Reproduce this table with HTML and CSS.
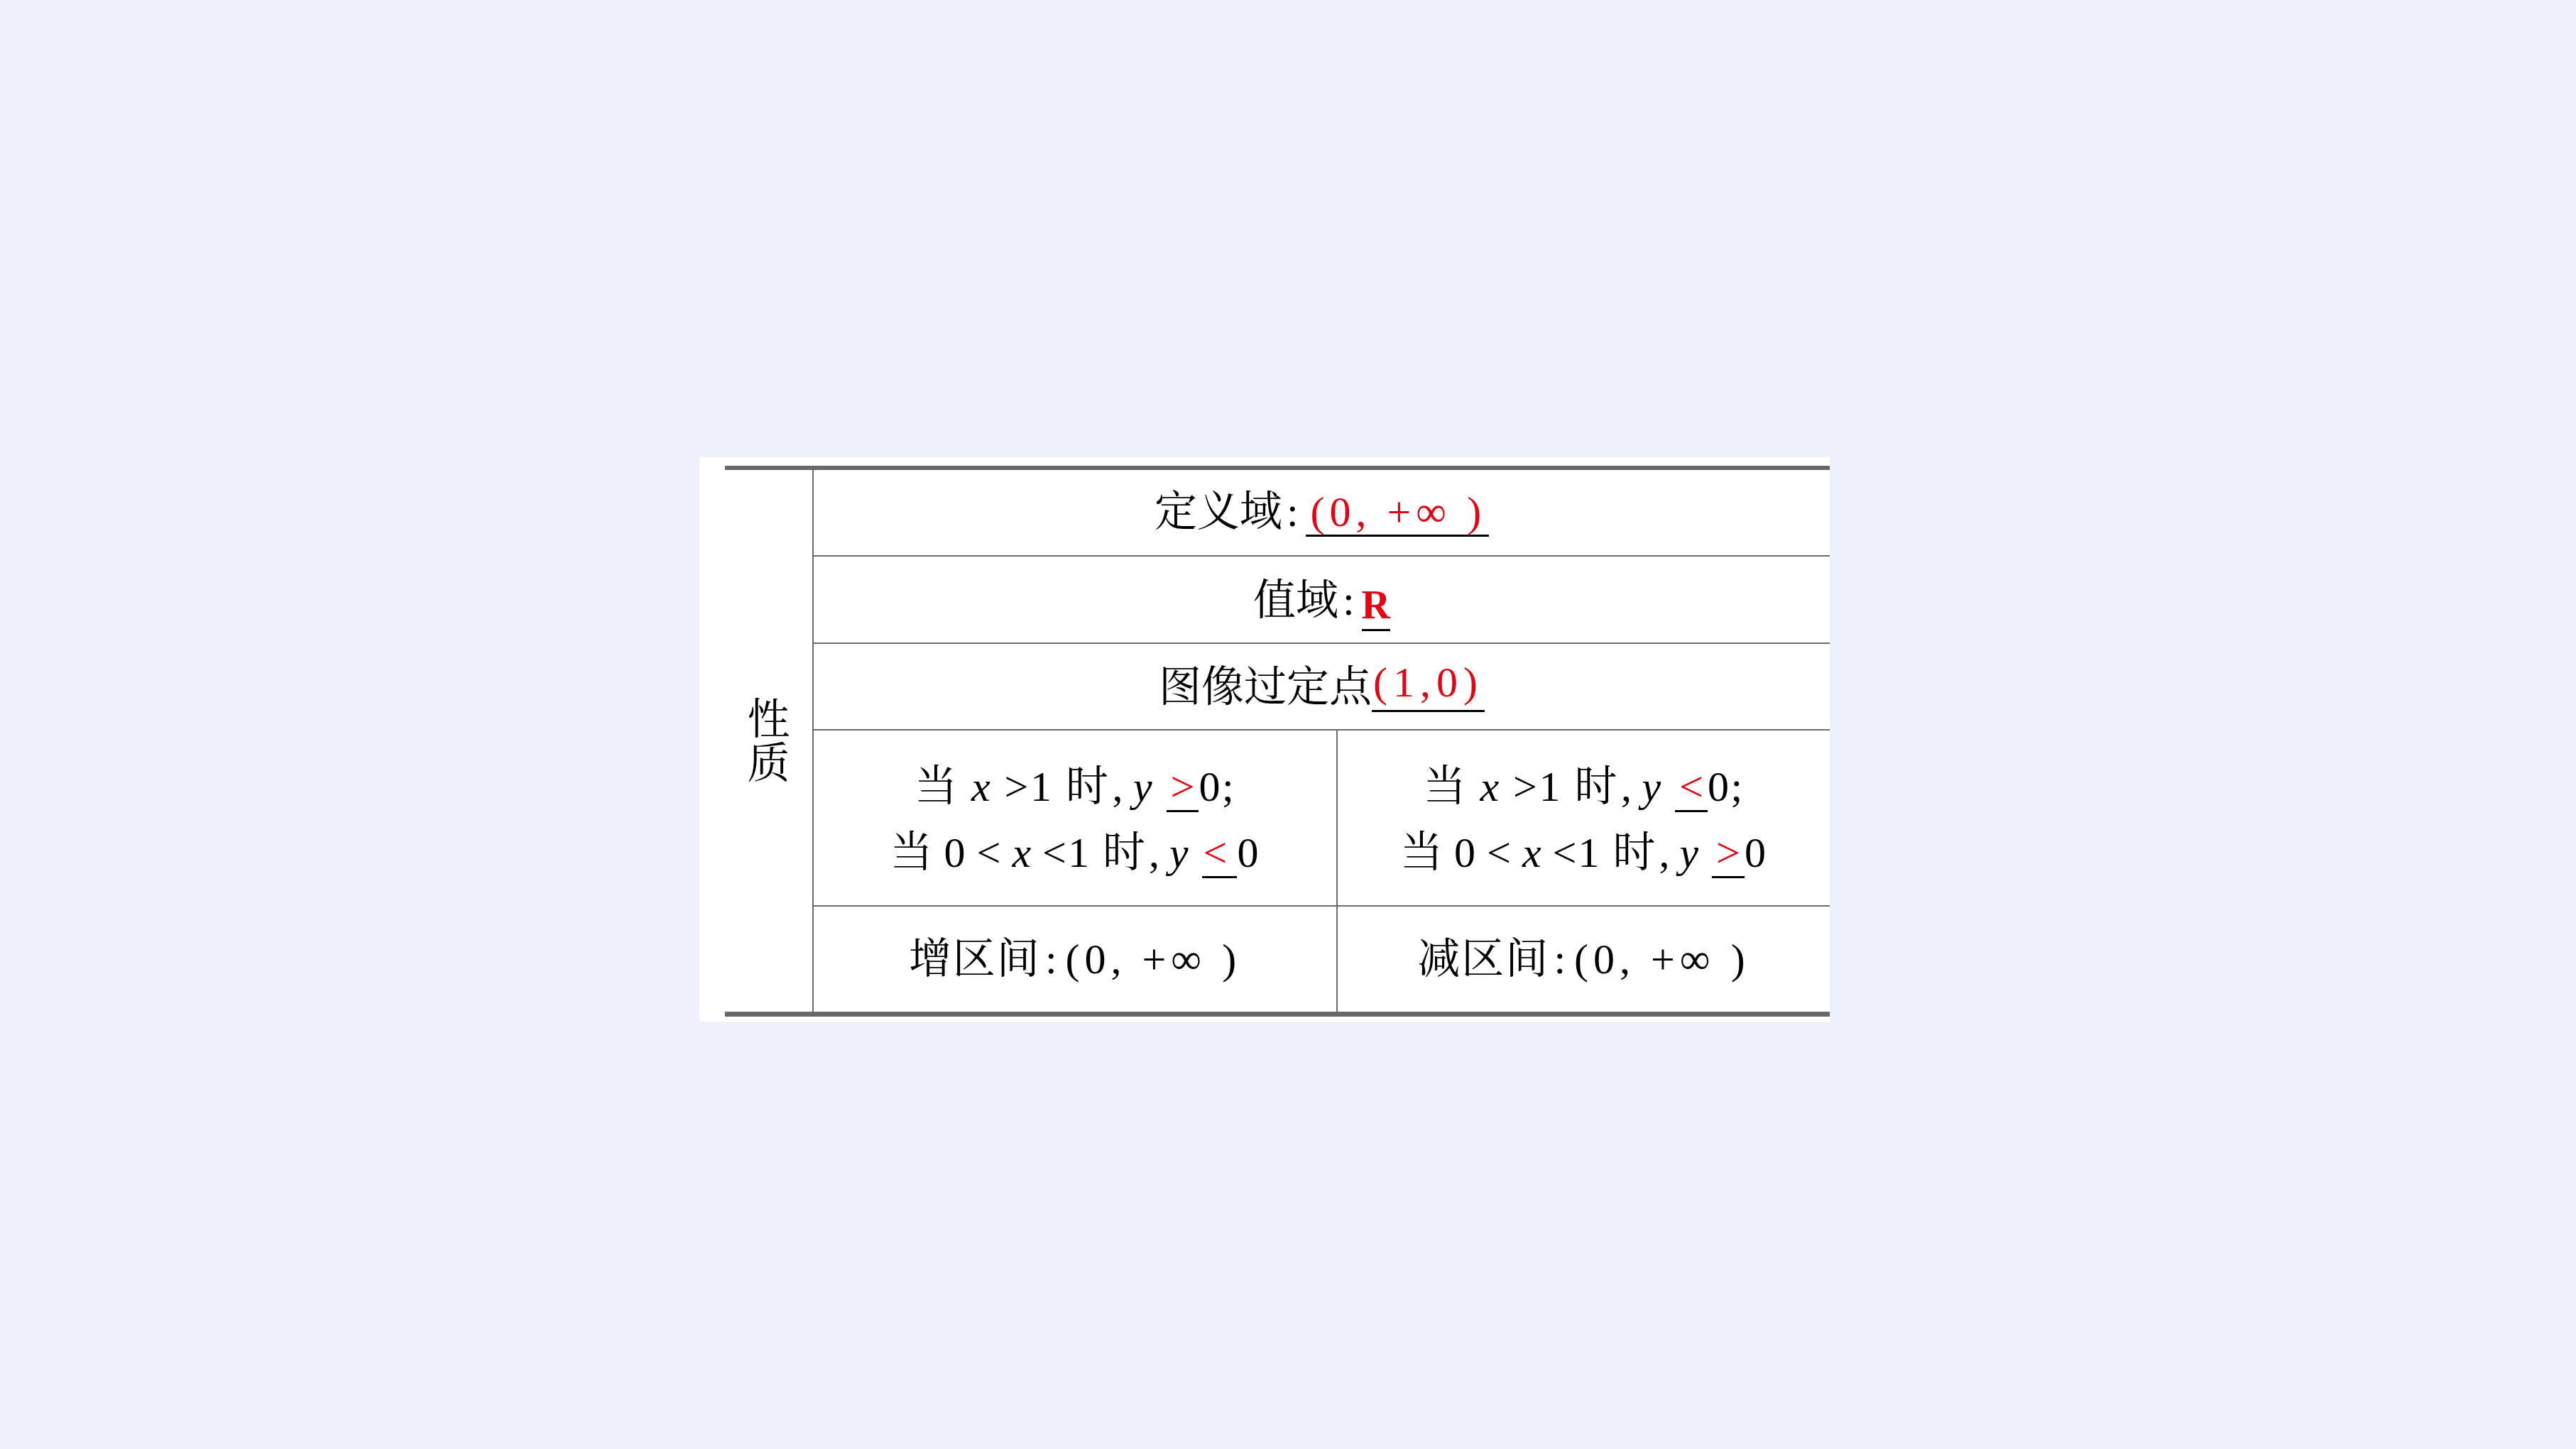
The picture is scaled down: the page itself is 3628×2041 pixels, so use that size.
FILE: index.html
```html
<!DOCTYPE html>
<html lang="zh-CN">
<head>
<meta charset="utf-8">
<title>对数函数的性质</title>
<link rel="stylesheet" href="styles.css">
</head>
<body>
<div class="panel">
  <div class="table">
    <div class="label">
      <span class="label-char">性</span>
      <span class="label-char">质</span>
    </div>
    <div class="props">
      <div class="row r1">
        <span class="txt">定义域<span class="colon">:</span><span class="blank red math">(0, +∞ )</span></span>
      </div>
      <div class="row r2">
        <span class="txt">值域<span class="colon">:</span><span class="blank red bold">R</span></span>
      </div>
      <div class="row r3">
        <span class="txt">图像过定点<span class="blank red math tight">(1,0)</span></span>
      </div>
      <div class="row r4 split">
        <div class="cell two-lines">
          <div class="line l1">当 <i>x</i> &gt;1 时<span class="cm">,</span><i>y</i> <span class="blank red sign">&gt;</span>0;</div>
          <div class="line">当&#8201;0&#8201;&lt;&#8201;<i>x</i>&#8201;&lt;1 时<span class="cm">,</span><i>y</i> <span class="blank red sign wide">&lt;</span>0</div>
        </div>
        <div class="cell two-lines right">
          <div class="line l1">当 <i>x</i> &gt;1 时<span class="cm">,</span><i>y</i> <span class="blank red sign">&lt;</span>0;</div>
          <div class="line">当&#8201;0&#8201;&lt;&#8201;<i>x</i>&#8201;&lt;1 时<span class="cm">,</span><i>y</i> <span class="blank red sign">&gt;</span>0</div>
        </div>
      </div>
      <div class="row r5 split">
        <div class="cell"><span class="txt">增区间<span class="colon">:</span><span class="math">(0, +∞ )</span></span></div>
        <div class="cell right"><span class="txt">减区间<span class="colon">:</span><span class="math">(0, +∞ )</span></span></div>
      </div>
    </div>
  </div>
</div>
</body>
</html>
```

FILE: styles.css
```css
* {
  box-sizing: border-box;
}

html, body {
  margin: 0;
  padding: 0;
}

body {
  background: #eff0fc;
  width: 3628px;
  height: 2041px;
  overflow: hidden;
  font-family: "Liberation Serif", "Noto Serif CJK SC", "Noto Sans CJK SC", serif;
  font-size: 60px;
  color: #000;
}

.panel {
  margin: 644px 0 0 985px;
  width: 1592px;
  height: 795px;
  background: #fff;
  padding: 12px 0 7px 36px;
}

.table {
  display: grid;
  grid-template-columns: 123px 1fr;
  height: 776px;
  border-top: 6px solid #686868;
  border-bottom: 7px solid #686868;
}

.label {
  display: flex;
  flex-direction: column;
  align-items: center;
  justify-content: center;
  line-height: 62px;
  padding-top: 2px;
}

.label-char {
  display: block;
}

.props {
  border-left: 2px solid #686868;
  display: flex;
  flex-direction: column;
}

.row {
  display: flex;
  align-items: center;
  justify-content: center;
  border-bottom: 2px solid #6c6c6c;
  line-height: 1.1;
  white-space: pre;
}

.txt {
  display: block;
  white-space: pre;
}

.r1 { height: 122px; }
.r2 { height: 123px; padding-top: 12px; }
.r3 { height: 122px; }
.r4 { height: 248px; }
.r5 { height: 148px; border-bottom: none; }

.split {
  display: grid;
  grid-template-columns: 736px 1fr;
  align-items: stretch;
}

.cell {
  display: flex;
  align-items: center;
  justify-content: center;
  white-space: pre;
  letter-spacing: 2px;
}

.cell.right {
  border-left: 2px solid #6c6c6c;
}

.two-lines {
  flex-direction: column;
  line-height: 93px;
  padding-top: 6px;
}

.line {
  display: block;
}

.l1 {
  letter-spacing: 2.5px;
}

.cm {
  margin: 0 12px 0 3px;
}

.colon {
  margin: 0 10px 0 6px;
}

.red {
  color: #e60012;
}

.bold {
  font-weight: bold;
  font-size: 56px;
}

.math {
  letter-spacing: 7px;
}

.tight {
  letter-spacing: 8px;
}

.blank {
  display: inline-block;
  line-height: 60px;
  padding: 0 4px 2px 7px;
  border-bottom: 3px solid #000;
}

.r2 .blank {
  padding: 0 0 4px 0;
  vertical-align: -5px;
}

.r3 .blank {
  padding: 0 2px 9px 2px;
  vertical-align: 7px;
}

.sign {
  padding: 0 6px 3px 6px;
  letter-spacing: 0;
}

.sign.wide {
  padding: 0 14px 3px 2px;
}

i {
  font-style: italic;
}
```
